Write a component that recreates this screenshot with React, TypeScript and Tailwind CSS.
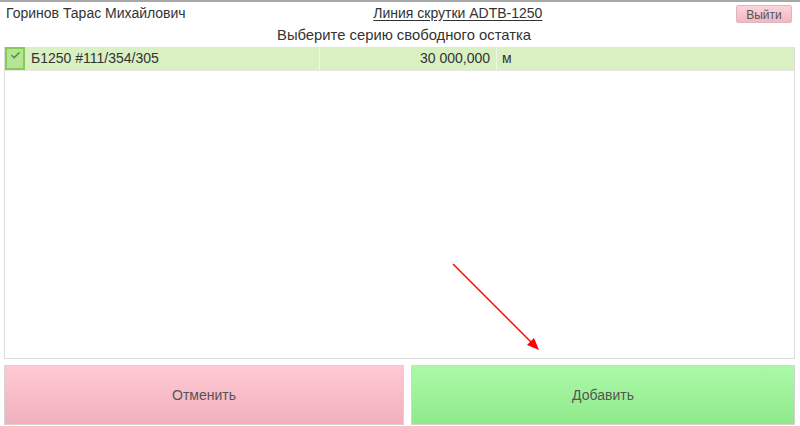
import { Check } from 'lucide-react';

const font = { fontFamily: '"Liberation Sans", Arial, sans-serif' };

export default function App() {
  return (
    <div
      className="w-[800px] h-[426px] bg-white border-t-2 border-[#a8a8a8] flex flex-col text-[#333] overflow-hidden relative"
      style={font}
    >
      {/* шапка */}
      <div className="flex items-center justify-between h-[22px] pl-[6px] pr-[8px]">
        <span className="text-[14px]">Горинов Тарас Михайлович</span>
        <span className="text-[14px] underline underline-offset-2 mr-[6px]">Линия скрутки ADTB-1250</span>
        <button className="w-[56px] h-[18px] mt-[1px] text-[12px] text-[#555] rounded-[2px] border border-[#e3b5bd] bg-gradient-to-b from-[#fcd4dc] to-[#f2b7c2]">
          Выйти
        </button>
      </div>

      <div className="text-center text-[14.8px] h-[23px] leading-[22px] pl-[8px]">
        Выберите серию свободного остатка
      </div>

      {/* список */}
      <div className="mx-[4px] h-[312px] border border-[#dcdcdc] border-t-0 flex flex-col mr-[5px]">
        <div className="flex h-[24px] bg-[#d9f0c3] border-b border-[#e6e6e6] text-[14px] items-center">
          <div className="w-[315px] flex items-center h-full border-r border-[#eef7e6]">
            <div className="w-[20px] h-[23px] border-2 border-[#84cc52] bg-[#b6e395] flex justify-center">
              <Check size={11} strokeWidth={3} className="text-[#3c9a2a] mt-[1px]" />
            </div>
            <span className="ml-[6px]">Б1250 #111/354/305</span>
          </div>
          <div className="w-[177px] h-full flex items-center justify-end pr-[6px] border-r border-[#eef7e6]">
            30 000,000
          </div>
          <div className="flex-1 pl-[5px]">м</div>
        </div>
      </div>

      {/* кнопки */}
      <div className="flex gap-[7px] mt-[6px] ml-[4px] mr-[5px] h-[60px]">
        <button className="w-[400px] h-full text-[14px] text-[#555] border border-[#d4d4d4] bg-gradient-to-b from-[#ffc9d3] to-[#f0b0bd]">
          Отменить
        </button>
        <button className="flex-1 h-full text-[14px] text-[#555] border border-[#d4d4d4] bg-gradient-to-b from-[#abf9a8] to-[#8fe98a]">
          Добавить
        </button>
      </div>

      {/* стрелка поверх */}
      <svg className="absolute left-0 top-0 pointer-events-none" width="800" height="426">
        <line x1="453" y1="262" x2="533" y2="342" stroke="#ff0000" strokeWidth="1.5" />
        <polygon points="539,348 527,343 534,336" fill="#ff0000" />
      </svg>
    </div>
  );
}
